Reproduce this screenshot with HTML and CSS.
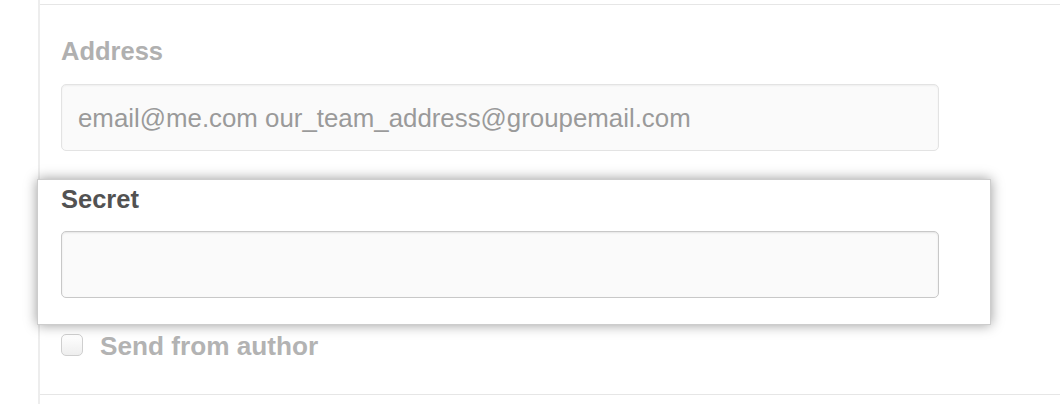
FILE: index.html
```html
<!DOCTYPE html>
<html>
<head>
<meta charset="utf-8">
<link rel="stylesheet" href="styles.css">
</head>
<body>
<div class="rail">
  <div class="section">
    <div class="field faded">
      <label class="label">Address</label>
      <div class="input input-faded"><span class="placeholder">email@me.com our_team_address@groupemail.com</span></div>
    </div>
    <div class="field highlight">
      <label class="label label-dark">Secret</label>
      <div class="input input-strong"></div>
    </div>
    <div class="check-row">
      <span class="checkbox"></span>
      <span class="check-label">Send from author</span>
    </div>
  </div>
</div>
</body>
</html>
```

FILE: styles.css
```css
html, body {
  margin: 0;
  padding: 0;
  background: #ffffff;
  font-family: "Liberation Sans", Arial, Helvetica, sans-serif;
}

.rail {
  margin-left: 38px;
  border-left: 2px solid #ededed;
  height: 404px;
  box-sizing: border-box;
  padding-top: 4px;
}

.section {
  border-top: 1px solid #e6e6e6;
  border-bottom: 1px solid #e6e6e6;
  padding: 31px 0 38px 21px;
}

.field {
  display: flex;
  flex-direction: column;
}

.label {
  font-size: 25.5px;
  line-height: 30px;
  font-weight: bold;
  color: #b0b0b0;
}

.label-dark {
  color: #525252;
}

.input {
  margin-top: 18px;
  width: 878px;
  height: 67px;
  box-sizing: border-box;
  border-radius: 5px;
  background: #fafafa;
  display: flex;
  align-items: center;
  padding-left: 16px;
}

.input-faded {
  border: 1px solid #e3e3e3;
  box-shadow: inset 0 1px 2px rgba(0, 0, 0, 0.05);
}

.input-strong {
  margin-top: 17px;
  border: 1px solid #c8c8c8;
  box-shadow: inset 0 1px 2px rgba(0, 0, 0, 0.09);
}

.placeholder {
  font-size: 25.85px;
  color: #9a9a9a;
  position: relative;
  top: 1px;
}

.highlight {
  position: relative;
  z-index: 2;
  margin-top: 28px;
  margin-left: -24px;
  width: 954px;
  box-sizing: border-box;
  padding: 4px 51px 26px 23px;
  background: #ffffff;
  border: 1px solid #cdcdcd;
  box-shadow: 0 0 12px rgba(0, 0, 0, 0.4);
}

.check-row {
  margin-top: 9px;
  display: flex;
  align-items: center;
  gap: 17px;
  height: 22px;
}

.checkbox {
  width: 22px;
  height: 22px;
  box-sizing: border-box;
  border: 1px solid #cfcfcf;
  border-radius: 5px;
  background: linear-gradient(#ffffff, #eeeeee);
}

.check-label {
  font-size: 26.2px;
  font-weight: bold;
  color: #b3b3b3;
  line-height: 30px;
  position: relative;
  top: 1px;
}
```
